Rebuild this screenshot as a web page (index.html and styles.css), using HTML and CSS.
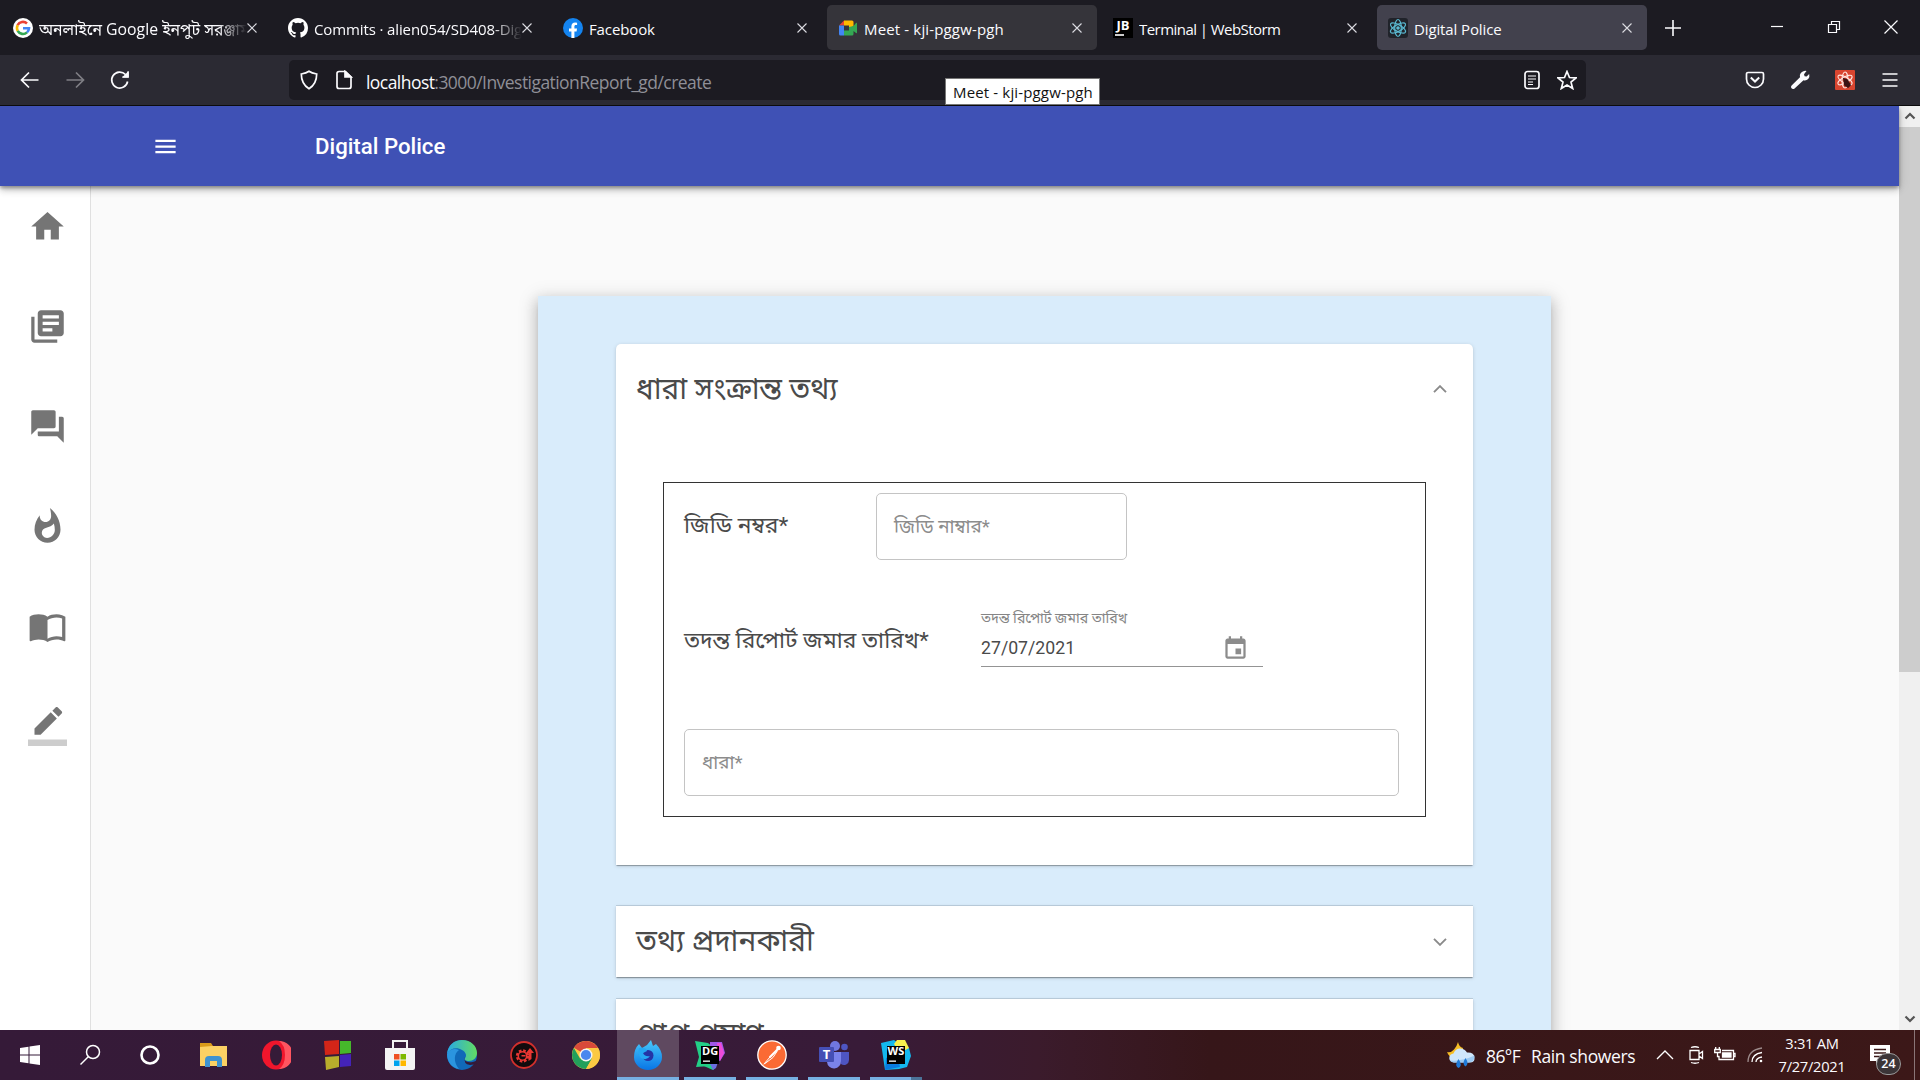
FILE: index.html
```html
<!DOCTYPE html>
<html lang="bn">
<head>
<meta charset="utf-8">
<title>Digital Police</title>
<link rel="stylesheet" href="styles.css">
</head>
<body>
<div class="desktop">
  <header class="tabs">
    <div class="tab">
      <svg class="fav" viewBox="0 0 20 20"><circle cx="10" cy="10" r="10" fill="#fff"/><g fill="none" stroke-width="2.6"><path d="M4.6 7.2A6 6 0 0 1 14 5.5" stroke="#ea4335"/><path d="M4.7 12.8a6 6 0 0 1 0-5.7" stroke="#fbbc05"/><path d="M14 14.4a6 6 0 0 1-9.3-1.6" stroke="#34a853"/><path d="M10 10.2h6a6 6 0 0 1-2 4.2" stroke="#4285f4"/></g></svg>
      <span class="tab-title fade bangla">অনলাইনে Google ইনপুট সরঞ্জাম</span>
      <svg class="x" viewBox="0 0 10 10"><path d="M.5.5l9 9M9.500.5l-9 9"/></svg>
    </div>
    <div class="tab">
      <svg class="fav" viewBox="0 0 16 16"><path fill="#fff" d="M8 0C3.580 0 0 3.580 0 8c0 3.540 2.290 6.530 5.470 7.590.4.070.55-.17.55-.38v-1.490c-2.010.37-2.530-.49-2.690-.94-.09-.23-.48-.94-.82-1.130-.28-.15-.68-.52-.01-.53.63-.01 1.080.58 1.230.82.72 1.210 1.870.87 2.330.66.07-.52.28-.87.51-1.070-1.780-.2-3.640-.89-3.640-3.950 0-.87.31-1.590.82-2.150-.08-.2-.36-1.020.08-2.120 0 0 .67-.21 2.200.82a7.600 7.600 0 0 1 4 0c1.530-1.040 2.200-.82 2.200-.82.44 1.100.16 1.920.08 2.120.51.56.82 1.270.82 2.150 0 3.070-1.870 3.750-3.650 3.950.29.25.54.73.54 1.480v2.200c0 .21.15.46.55.38A8 8 0 0 0 16 8c0-4.420-3.580-8-8-8z"/></svg>
      <span class="tab-title fade">Commits · alien054/SD408-Digital</span>
      <svg class="x" viewBox="0 0 10 10"><path d="M.5.5l9 9M9.500.5l-9 9"/></svg>
    </div>
    <div class="tab">
      <svg class="fav" viewBox="0 0 20 20"><circle cx="10" cy="10" r="10" fill="#1484f0"/><path d="M8.400 20v-6.600H6v-2.900h2.400V8.300c0-2.500 1.500-3.800 3.700-3.800l2 .2v2.400h-1.200c-1.200 0-1.500.7-1.500 1.500v1.900h2.600l-.4 2.900h-2.200V20z" fill="#fff"/></svg>
      <span class="tab-title">Facebook</span>
      <svg class="x" viewBox="0 0 10 10"><path d="M.5.5l9 9M9.500.5l-9 9"/></svg>
    </div>
    <div class="tab hover">
      <svg class="fav" viewBox="0 0 20 20"><path fill="#ea4335" d="M6 2.500v5H1z"/><path fill="#ffba00" d="M6 2.500h8a1.500 1.500 0 0 1 1.500 1.500v4L11 11V7.500H6z"/><path fill="#4285f4" d="M1 7.500h5v10H2.500A1.500 1.500 0 0 1 1 16z"/><path fill="#34a853" d="M6 12.500h5V9l4.500-1 2.500-3q1-.6 1 .6v8.800q0 1.200-1 .6L15.500 13v3a1.500 1.500 0 0 1-1.500 1.500H6z"/></svg>
      <span class="tab-title loose">Meet - kji-pggw-pgh</span>
      <svg class="x" viewBox="0 0 10 10"><path d="M.5.5l9 9M9.500.5l-9 9"/></svg>
    </div>
    <div class="tab">
      <span class="fav jb">JB</span>
      <span class="tab-title tight">Terminal | WebStorm</span>
      <svg class="x" viewBox="0 0 10 10"><path d="M.5.5l9 9M9.500.5l-9 9"/></svg>
    </div>
    <div class="tab active">
      <svg class="fav" viewBox="0 0 20 20"><rect width="20" height="20" rx="3" fill="#20232a"/><g fill="none" stroke="#5ab9d1" stroke-width="1.200"><ellipse cx="10" cy="10" rx="8.500" ry="3.300" transform="rotate(90 10 10)"/><ellipse cx="10" cy="10" rx="8.500" ry="3.300" transform="rotate(30 10 10)"/><ellipse cx="10" cy="10" rx="8.500" ry="3.300" transform="rotate(150 10 10)"/></g><circle cx="10" cy="10" r="1.800" fill="#5ab9d1"/></svg>
      <span class="tab-title">Digital Police</span>
      <svg class="x" viewBox="0 0 10 10"><path d="M.5.5l9 9M9.500.5l-9 9"/></svg>
    </div>
    <svg class="newtab" viewBox="0 0 16 16"><path d="M8 0v16M0 8h16"/></svg>
    <div class="wincontrols">
      <svg viewBox="0 0 14 14"><path d="M1 6.500h12"/></svg>
      <svg viewBox="0 0 14 14"><path d="M1.500 4.500h8v8h-8zM4.500 4.500v-3h8v8h-3"/></svg>
      <svg viewBox="0 0 14 14"><path d="M.5.5l13 13M13.500.5l-13 13"/></svg>
    </div>
  </header>

  <div class="toolbar">
    <div class="nav">
      <svg viewBox="0 0 20 20"><path d="M18.500 10H2M9 2.500L1.500 10 9 17.500"/></svg>
      <svg class="dim" viewBox="0 0 20 20"><path d="M1.500 10H18M11 2.500l7.500 7.500-7.500 7.500"/></svg>
      <svg viewBox="0 0 20 20"><path d="M17.600 11.500A8 8 0 1 1 15.500 4.500l2 2M18 1.500V7h-5.500"/><path fill="#fbfbfe" stroke="none" d="M18.600 1v6.600H12z"/></svg>
    </div>
    <div class="urlbar">
      <svg class="ub" viewBox="0 0 20 20"><path d="M10 1.200c2.400 1.800 4.700 2.300 7.700 2.800 0 6.500-1.700 11-7.700 14.800C4 15 2.300 10.500 2.300 4c3-.5 5.300-1 7.700-2.800z"/></svg>
      <svg class="ub" viewBox="0 0 20 20"><path d="M5 1.500h6.500L17 7v9.500a2 2 0 0 1-2 2H5a2 2 0 0 1-2-2v-13a2 2 0 0 1 2-2z"/><path d="M11 1.500V7h6z" fill="#fbfbfe"/></svg>
      <span class="url"><b>localhost</b>:3000/InvestigationReport_gd/create</span>
      <svg class="ub reader" viewBox="0 0 20 20"><rect x="3" y="1.500" width="14" height="17" rx="2.500"/><path d="M6 6h8M6 9h8M6 12h5M6 14.500h5" stroke-width="1.200"/></svg>
      <svg class="ub" viewBox="0 0 20 20"><path d="M10 1.500l2.500 6 6.500.4-5 4.200 1.700 6.400L10 15l-5.700 3.500L6 12.100 1 7.900l6.500-.4z"/></svg>
    </div>
    <div class="ext">
      <svg viewBox="0 0 20 20"><path d="M3 2.500h14a1.500 1.500 0 0 1 1.500 1.500v5a8.500 8.500 0 0 1-17 0V4A1.500 1.500 0 0 1 3 2.500z"/><path d="M5.800 7.500l4.200 4 4.200-4" stroke-width="2"/></svg>
      <svg viewBox="0 0 20 20"><path fill="#fbfbfe" stroke="none" d="M14 1q1.500-.5 2.500 0l-2.500 3.200.6 2 2 .4L19.200 4q.8 3-1 5-2 1.900-4.700 1.200L4.300 18.700Q2.500 19.500 1.300 18 .5 16.700 1.600 15.500L10 7.200Q9 2.700 14 1z"/></svg>
      <svg viewBox="0 0 20 20"><rect width="20" height="20" rx="1" fill="#d9452f" stroke="none"/><g stroke="#ffe3dc" stroke-width="1.100"><ellipse cx="10" cy="10" rx="8" ry="3" transform="rotate(90 10 10)"/><ellipse cx="10" cy="10" rx="8" ry="3" transform="rotate(30 10 10)"/><ellipse cx="10" cy="10" rx="8" ry="3" transform="rotate(150 10 10)"/></g><path d="M9 9l3 1 3 5-2 2-3-2z" fill="#3c1414" stroke="#3c1414"/></svg>
      <svg viewBox="0 0 20 20"><path d="M2.500 4h15M2.500 10h15M2.500 16h15"/></svg>
    </div>
  </div>
  <div class="tooltip">Meet - kji-pggw-pgh</div>

  <div class="viewport">
    <div class="page">
      <div class="appbar">
        <svg viewBox="0 0 24 24"><path d="M3 18h18v-2H3v2zm0-5h18v-2H3v2zm0-7v2h18V6H3z"/></svg>
        <h1>Digital Police</h1>
      </div>
      <div class="body">
        <nav class="sidebar">
          <svg viewBox="0 0 24 24"><path d="M10 20v-6h4v6h5v-8h3L12 3 2 12h3v8z"/></svg>
          <svg viewBox="0 0 24 24"><path d="M4 6H2v14c0 1.100.9 2 2 2h14v-2H4V6zm16-4H8c-1.100 0-2 .9-2 2v12c0 1.100.9 2 2 2h12c1.100 0 2-.9 2-2V4c0-1.100-.9-2-2-2zm-1 9H9V9h10v2zm-4 4H9v-2h6v2zm4-8H9V5h10v2z"/></svg>
          <svg viewBox="0 0 24 24"><path d="M21 6h-2v9H6v2c0 .55.45 1 1 1h11l4 4V7c0-.55-.45-1-1-1zm-4 6V3c0-.55-.45-1-1-1H3c-.55 0-1 .45-1 1v14l4-4h10c.55 0 1-.45 1-1z"/></svg>
          <svg viewBox="0 0 24 24"><path d="M13.500.67s.74 2.650.74 4.800c0 2.060-1.350 3.730-3.410 3.730-2.070 0-3.630-1.670-3.630-3.730l.03-.36C5.210 7.510 4 10.620 4 14c0 4.420 3.580 8 8 8s8-3.580 8-8C20 8.610 17.410 3.800 13.500.67zM11.710 19c-1.780 0-3.220-1.400-3.220-3.140 0-1.620 1.050-2.760 2.810-3.120 1.770-.36 3.600-1.210 4.620-2.580.39 1.290.59 2.650.59 4.040 0 2.650-2.150 4.800-4.800 4.800z"/></svg>
          <svg viewBox="0 0 24 24"><path d="M21 5c-1.110-.35-2.330-.5-3.500-.5-1.950 0-4.050.4-5.500 1.500-1.450-1.100-3.550-1.500-5.500-1.500S2.450 4.900 1 6v14.650c0 .25.25.5.5.5.1 0 .15-.05.25-.05C3.100 20.450 5.050 20 6.500 20c1.950 0 4.050.4 5.500 1.500 1.350-.85 3.800-1.500 5.500-1.500 1.650 0 3.350.3 4.750 1.050.1.050.15.050.25.050.25 0 .5-.25.5-.5V6c-.6-.45-1.250-.75-2-1zm0 13.500c-1.100-.35-2.300-.5-3.500-.5-1.700 0-4.150.65-5.500 1.500V8c1.350-.85 3.800-1.500 5.500-1.500 1.200 0 2.400.15 3.500.5v11.500z"/></svg>
          <svg viewBox="0 0 24 24"><path d="M17.750 7L14 3.250l-10 10V17h3.750l10-10zm2.960-2.960c.39-.39.39-1.020 0-1.410L18.370.29a.996.996 0 0 0-1.410 0L15 2.250 18.750 6l1.960-1.960z"/><path fill-opacity=".36" d="M0 20h24v4H0z"/></svg>
        </nav>
        <main class="paper">
          <section class="card open">
            <div class="card-head"><h2>ধারা সংক্রান্ত তথ্য</h2><svg viewBox="0 0 14 8"><path d="M1 7.200l6-6 6 6"/></svg></div>
            <div class="box">
              <div class="row one"><label>জিডি নম্বর*</label><div class="field">জিডি নাম্বার*</div></div>
              <div class="row two">
                <label>তদন্ত রিপোর্ট জমার তারিখ*</label>
                <div class="date">
                  <small>তদন্ত রিপোর্ট জমার তারিখ</small>
                  <div class="date-row"><span>27/07/2021</span><svg viewBox="0 0 24 24"><path d="M17 12h-5v5h5v-5zM16 1v2H8V1H6v2H5c-1.110 0-1.990.9-1.990 2L3 19c0 1.100.89 2 2 2h14c1.100 0 2-.9 2-2V5c0-1.100-.9-2-2-2h-1V1h-2zm3 18H5V8h14v11z"/></svg></div>
                </div>
              </div>
              <div class="field wide">ধারা*</div>
            </div>
          </section>
          <section class="card"><div class="card-head"><h2>তথ্য প্রদানকারী</h2><svg viewBox="0 0 14 8"><path d="M1 .8l6 6 6-6"/></svg></div></section>
          <section class="card third"><div class="card-head"><h2>প্রাপ্ত প্রমাণ</h2></div></section>
        </main>
      </div>
    </div>
    <div class="scrollbar">
      <svg viewBox="0 0 12 8"><path d="M1.500 6.500L6 2l4.500 4.500"/></svg>
      <div class="thumb"></div>
      <svg viewBox="0 0 12 8"><path d="M1.500 1.500L6 6l4.500-4.500"/></svg>
    </div>
  </div>

  <footer class="taskbar">
    <div class="t sys"><svg width="20" height="20" viewBox="0 0 20 20"><path fill="#fff" d="M0 3l8.500-1.200v7.700H0zM9.500 1.600L20 0v9.500H9.500zM0 10.500h8.500v7.700L0 17zM9.500 10.500H20V20L9.500 18.400z"/></svg></div>
    <div class="t sys"><svg width="22" height="22" viewBox="0 0 22 22"><g fill="none" stroke="#fff" stroke-width="1.500"><circle cx="14" cy="8" r="6.500"/><path d="M9.500 12.500L1.500 20.500"/></g></svg></div>
    <div class="t sys"><svg width="22" height="22" viewBox="0 0 22 22"><circle cx="11" cy="11" r="8.500" fill="none" stroke="#fff" stroke-width="2.600"/></svg></div>
    <div class="t first"><svg width="30" height="30" viewBox="0 0 30 30"><path fill="#d99a1a" d="M1 3h11l2 3v5H1z"/><path fill="#fbd164" d="M1 7l12-1h15v20H1z"/><path fill="#3f93cf" d="M6 27v-7a4 4 0 0 1 4-4h9a4 4 0 0 1 4 4v7h-5v-6h-7v6z"/></svg></div>
    <div class="t"><svg width="30" height="30" viewBox="0 0 30 30"><ellipse cx="15" cy="15" rx="14" ry="14.500" fill="#f0162c"/><path fill="#ff5560" d="M18 1a14 14 0 0 1 0 28q6-4 6-14T18 1z"/><ellipse cx="15" cy="15" rx="6" ry="10.500" fill="#351b38"/></svg></div>
    <div class="t"><svg width="28" height="30" viewBox="0 0 28 30"><path fill="#d32518" d="M0 1l15-1v14L1 15z"/><path fill="#46b82b" d="M16 1h11v12l-11 1z"/><path fill="#b8ad2c" d="M1 17l14-1v11L2 30z"/><path fill="#4423b8" d="M16 15l11-1v12l-11 1z"/></svg></div>
    <div class="t"><svg width="30" height="30" viewBox="0 0 30 30"><path fill="none" stroke="#f2f2f2" stroke-width="2" d="M8 9V1h14v8"/><path fill="#f4f4f4" d="M0 8h30v20a2 2 0 0 1-2 2H2a2 2 0 0 1-2-2z"/><path fill="#ef4f22" d="M9 14h5.500v5.500H9z"/><path fill="#7db900" d="M15.500 14H21v5.500h-5.500z"/><path fill="#00a3ee" d="M9 20.500h5.500V26H9z"/><path fill="#ffb800" d="M15.500 20.500H21V26h-5.500z"/></svg></div>
    <div class="t"><svg width="30" height="30" viewBox="0 0 30 30"><defs><linearGradient id="eg"><stop offset="0" stop-color="#28a8e6"/><stop offset="1" stop-color="#62dc62"/></linearGradient></defs><circle cx="15" cy="15" r="15" fill="#1069b8"/><path fill="url(#eg)" d="M0 14C1 5 7 0 15 0c9 0 15 6 15 13 0 5-4 8-8 8-3 0-5-1-4-3 2-2 1-6-3-8C10 7 3 8 0 14z"/><path fill="#2b95df" d="M0 14c2-5 8-6 12-4-5 3-6 12 0 19C5 28 0 22 0 14z"/><path fill="#341a38" d="M18 17c-2 4 3 7 11 4l1 0v2q-3 2-7 2-7-1-5-8z"/></svg></div>
    <div class="t"><svg width="28" height="28" viewBox="0 0 28 28"><circle cx="14" cy="14" r="13" fill="#120b0d" stroke="#d2302c" stroke-width="1.800"/><circle cx="12.500" cy="15" r="5.500" fill="none" stroke="#e93733" stroke-width="2.400" stroke-dasharray="2.600 1.720"/><circle cx="12.500" cy="15" r="4.200" fill="none" stroke="#e93733" stroke-width="1.600"/><path fill="#e93733" d="M20 7l4 5h-2.500v6l-3 2v-8H16zM11.500 14h4v1.600h-4z"/></svg></div>
    <div class="t"><svg width="28" height="28" viewBox="0 0 28 28"><circle cx="14" cy="14" r="14" fill="#fbc943"/><path fill="#d84a3a" d="M14 14L2 6.800A14 14 0 0 1 26.100 7H14z"/><path fill="#22a05b" d="M1.900 7A14 14 0 0 0 14 28l6-10.500-12 0z"/><path fill="#fbc943" d="M20 17.500L14 28A14 14 0 0 0 26.100 7H14z"/><circle cx="14" cy="14" r="6.500" fill="#f4f4f4"/><circle cx="14" cy="14" r="5.100" fill="#4a87ee"/></svg></div>
    <div class="t run current"><svg width="30" height="30" viewBox="0 0 30 30"><defs><linearGradient id="fx" x2="0" y2="1"><stop offset="0" stop-color="#49c9fb"/><stop offset="1" stop-color="#0875e5"/></linearGradient></defs><path fill="url(#fx)" d="M6 4l3 4 5-3 4-5 2 6 3-2q6 6 6 13a14 13 0 0 1-28 0Q1 9 6 4z"/><circle cx="15" cy="15.500" r="5.500" fill="#2434a6"/><path fill="#25a8f5" d="M6 8q7-1 8 3l-4 2q2 4 7 3-3 5-9 2-4-5-2-10z"/></svg></div>
    <div class="t run"><svg width="30" height="30" viewBox="0 0 30 30"><path fill="#22cf87" d="M0 1l13 2 6 5-4 18-14 1 3-10z"/><path fill="#a057e8" d="M15 2h12l3 11-5 8-10-3z"/><path fill="#ed4bd8" d="M22 3h4l3 10-4 8z"/><path fill="#22cf87" d="M2 23l10-3 8 8-2 2z"/><path fill="#6b6fe0" d="M14 22h9l-2 6-3 2z"/><path d="M6 6h18v18H6z"/><path fill="#fff" d="M8 20.500h7v1.300H8z"/><text x="7" y="15" class="ide">DG</text></svg></div>
    <div class="t run"><svg width="30" height="30" viewBox="0 0 30 30"><circle cx="15" cy="15" r="14.200" fill="#fb6a34" stroke="#fff" stroke-width="1.300"/><g fill="none" stroke="#fff" stroke-linecap="round"><path stroke-width="2.200" d="M13 17l7-7"/><path stroke-width="1" d="M7 24l6-7M8 23.500l8-6 4-6"/></g><circle cx="21.500" cy="8" r="2.300" fill="#fff"/></svg></div>
    <div class="t run"><svg width="30" height="30" viewBox="0 0 30 30"><circle cx="16" cy="6" r="5" fill="#7077df"/><circle cx="25.500" cy="7" r="3.300" fill="#4e55c2"/><path fill="#4e55c2" d="M20 12h10v8a5 5 0 0 1-8 4z"/><path fill="#7b83eb" d="M10 12h12v9a7 7 0 0 1-14 1z"/><rect y="7" width="15" height="15" rx="1" fill="#454fb5"/><text x="3.700" y="19" class="tm">T</text></svg></div>
    <div class="t run split"><svg width="30" height="30" viewBox="0 0 30 30"><path fill="#13b8ef" d="M0 3l13-3 7 5 8 3 2 8-4 11-8 2-14 1z"/><path fill="#f7f04e" d="M16 0h8l4 8-9 5-6-9z"/><path fill="#087be0" d="M5 18l11-4 3 13-15 3z"/><path d="M6 6h18v18H6z"/><path fill="#fff" d="M8 20.500h7v1.300H8z"/><text x="6.500" y="15" class="ide">WS</text></svg></div>

    <div class="tray">
      <svg class="weather" viewBox="0 0 28 27"><path fill="#f6bd25" d="M11 0q1 5 5 6l-1 8-9 2q-4-1-6-6 4 1 7-2.500T11 0z"/><path fill="#cfe6fb" d="M7 20.500a4.500 4.500 0 0 1-.5-9q2-5 6.500-5t7 4q7-.5 7.500 5T22 20.500z"/><path fill="#9ccaf3" d="M7 20.500a5 5 0 0 1-4-2q12 1 24.500-5 0 7-6 7z"/><path fill="#1f7ad8" d="M11.500 17q4.500 6.500 0 9-4.500-2.500 0-9zM18.500 16q4 6 0 8.500-4-2.500 0-8.500z"/></svg>
      <span class="temp">86°F</span><span class="cond">Rain showers</span>
      <svg class="i up" viewBox="0 0 18 18"><path d="M1 13l8-8 8 8"/></svg>
      <svg class="i cam" viewBox="0 0 18 18"><path d="M3 4.500h9v9H3zM12 8l3.500-2.500v7L12 10M4 1.500q4-1.500 8 0M4 16.500q4 1.500 8 0"/></svg>
      <svg class="i bat" viewBox="0 0 22 18"><path d="M8 4.500h11.500v9H5v-3.500M19.500 7.500h1.500v3h-1.500M1.700 1v2.500M5.300 1v2.500M.7 3.500h5.600v3H.7zM3.500 6.500v4h2"/><path d="M8.500 7h8.500v4H8.500z" fill="#fff"/></svg>
      <svg class="i wifi" viewBox="0 0 18 18"><path opacity=".5" d="M2 16Q2 4 16 2"/><path d="M6 16q0-8 10-9.500M10 16q0-4 6-5"/><circle cx="15" cy="15" r="1.300" fill="#fff" stroke="none"/></svg>
      <div class="clock"><span>3:31 AM</span><span>7/27/2021</span></div>
      <div class="notif"><svg viewBox="0 0 20 20"><path fill="#fff" d="M0 0h20v16H10l-4 4v-4H0z"/><path stroke="#3a1818" stroke-width="1.300" d="M4 4.500h12M4 8h12M4 11.500h8"/></svg><span class="badge">24</span></div>
      <div class="peek"></div>
    </div>
  </footer>
</div>
</body>
</html>
```
FILE: styles.css
```css
* { box-sizing: border-box; }
body { margin: 0; }
svg { display: block; flex: none; }
h1, h2 { margin: 0; font-weight: 400; }
.desktop { position: relative; width: 1920px; height: 1080px; overflow: hidden; display: flex; flex-direction: column; font-family: "Open Sans", "Noto Sans Bengali", sans-serif; color: #fbfbfe; }

/* browser chrome */
.tabs { height: 55px; flex: none; background: #1c1b22; padding: 5px 0 5px 2px; display: flex; gap: 5px; }
.tab { width: 270px; height: 45px; border-radius: 5px; display: flex; align-items: center; padding: 0 15px 0 11px; }
.tab.hover { background: #35343a; }
.tab.active { background: #42414d; }
.fav { width: 20px; height: 20px; flex: none; }
.jb { background: #000; color: #fff; font: 700 13px/15px "Open Sans", sans-serif; text-align: center; position: relative; }
.jb::after { content: ""; position: absolute; left: 2px; bottom: 2px; width: 9px; height: 2px; background: #ccc; }
.tab-title { flex: 1; min-width: 0; margin-left: 6px; padding-top: 2px; overflow: hidden; white-space: nowrap; font-size: 15px; line-height: 24px; letter-spacing: -.12px; }
.tab-title.fade { -webkit-mask-image: linear-gradient(90deg, #000 86%, transparent); mask-image: linear-gradient(90deg, #000 86%, transparent); }
.tab-title.bangla { font-size: 15.800px; letter-spacing: 0; }
.tab-title.loose { letter-spacing: .15px; }
.tab-title.tight { letter-spacing: -.55px; }
.x { width: 10px; height: 10px; }
.x path { stroke: #dcdce2; stroke-width: 1.100; fill: none; }
.newtab { width: 16px; height: 16px; margin: 15px 0 0 13px; stroke: #fbfbfe; stroke-width: 1.600; }
.wincontrols { display: flex; gap: 43px; margin: 15px 22px 0 auto; }
.wincontrols svg { width: 14px; height: 14px; fill: none; stroke: #fbfbfe; stroke-width: 1.200; }
.toolbar { height: 51px; flex: none; background: #2b2a33; border-bottom: 1px solid #0c0c0d; display: flex; align-items: center; padding-right: 20px; }
.nav { display: flex; gap: 25px; padding-left: 20px; width: 289px; }
.nav svg, .ub, .ext svg { width: 20px; height: 20px; fill: none; stroke: #fbfbfe; stroke-width: 1.700; }
.nav .dim { opacity: .4; }
.urlbar { width: 1297px; height: 40px; background: #1c1b22; border-radius: 5px; display: flex; align-items: center; padding: 0 9px 0 10px; gap: 15px; }
.url { flex: 1; margin-left: -3px; padding-top: 3px; font-size: 17.500px; letter-spacing: -.55px; color: #8f8f97; }
.url b { font-weight: 400; color: #fbfbfe; }
.ext { display: flex; gap: 25px; margin-left: auto; }
.tooltip { position: absolute; left: 945px; top: 78px; width: 155px; height: 27px; background: #fff; border: 1px solid #767676; color: #111; font-size: 15px; line-height: 27px; padding-left: 7px; letter-spacing: .15px; white-space: nowrap; z-index: 5; }

/* page */
.viewport { height: 924px; flex: none; display: flex; overflow: hidden; background: #fafafa; }
.page { flex: 1; min-width: 0; font-family: Roboto, "Noto Sans Bengali", sans-serif; color: #4a4a4a; }
.appbar { position: relative; z-index: 2; height: 80px; background: #3f51b5; color: #fff; display: flex; align-items: center; padding-left: 151.500px; box-shadow: 0 2px 5px -1px rgba(0,0,0,.2), 0 5px 6px 0 rgba(0,0,0,.14), 0 1px 12px 0 rgba(0,0,0,.12), 0 2px 3px rgba(0,0,0,.2); }
.appbar svg { width: 27px; height: 27px; fill: #fff; }
.appbar h1 { margin-left: 136.500px; font-size: 22.200px; font-weight: 500; line-height: 30px; }
.body { display: flex; height: 844px; }
.sidebar { width: 91px; background: #fff; border-right: 1px solid #e0e0e0; display: flex; flex-direction: column; gap: 61px; padding: 21px 0 0 27.500px; }
.sidebar svg { width: 39px; height: 39px; fill: #757575; }
.paper { width: 1013px; height: 900px; margin: 110px 0 0 447px; padding: 48px 78px; background: #d9ecfb; box-shadow: 0 6px 6px -3px rgba(0,0,0,.2), 0 6px 13px 1px rgba(0,0,0,.16), 0 4px 18px 3px rgba(0,0,0,.12); }
.card { height: 71px; margin-bottom: 22px; background: #fff; box-shadow: 0 2px 1px -1px rgba(0,0,0,.2), 0 1px 1px rgba(0,0,0,.14), 0 1px 4px rgba(0,0,0,.14), 0 -1px 0 #bdd0df; }
.card.open { height: 521px; margin-bottom: 41px; border-radius: 5px 5px 0 0; box-shadow: 0 2px 1px -1px rgba(0,0,0,.2), 0 1px 1px rgba(0,0,0,.14), 0 1px 4px rgba(0,0,0,.14); }
.card-head { height: 71px; display: flex; align-items: center; justify-content: space-between; padding: 0 26px 0 20px; }
.card-head h2 { margin-top: -2px; }
.open .card-head { height: 90px; }
.open .card-head h2 { margin-top: 0; }
.card-head svg { width: 14px; height: 8px; fill: none; stroke: #8a8a8a; stroke-width: 1.900; }
h2 { font-size: 29.700px; line-height: 40px; white-space: nowrap; }
.box { margin: 48px 47px 0; height: 335px; border: 1px solid #333; padding: 10px 20px 0; }
.row { display: flex; align-items: center; white-space: nowrap; }
.row label { font-size: 22.800px; }
.row.one label { width: 192px; padding-top: 1px; }
.field { width: 251px; height: 67px; border: 1px solid #c4c4c4; border-radius: 5px; padding-left: 17px; line-height: 66px; font-size: 18.800px; color: #8c8c8c; }
.field.wide { width: 715px; margin-top: 62px; }
.row.two { height: 60px; margin-top: 47px; align-items: flex-start; }
.row.two label { width: 297px; line-height: 67px; }
.date { width: 282px; height: 60px; border-bottom: 1px solid #949494; }
.date small { display: block; height: 24px; font-size: 14.200px; line-height: 23px; color: #858585; }
.date-row { display: flex; align-items: center; justify-content: space-between; height: 34px; padding-right: 14px; font-size: 17.700px; }
.date-row svg { width: 27px; height: 27px; fill: #8c8c8c; }
.scrollbar { width: 21px; background: #f0f0f0; display: flex; flex-direction: column; align-items: center; padding: 6px 0 7px; }
.scrollbar svg { width: 12px; height: 8px; fill: none; stroke: #555; stroke-width: 2.200; }
.thumb { width: 21px; height: 545px; margin: 7px 0 auto; background: #cdcdcd; }

/* taskbar */
.taskbar { height: 50px; flex: none; display: flex; background: linear-gradient(90deg, #351a38, #381b38 45%, #3b1b2c 54%, #361619 63%, #3c1818); }
.t { width: 62px; height: 50px; flex: none; display: flex; align-items: center; justify-content: center; position: relative; }
.t.sys { width: 60px; }
.t.first { margin-left: 3px; }
.t.run::after { content: ""; position: absolute; bottom: 0; left: 5px; right: 5px; height: 3px; background: #76b0e2; }
.t.current { background: #5f4960; }
.t.run.current::after { left: 0; right: 0; }
.t.split::after { background: linear-gradient(90deg, #76b0e2 78%, #4b7398 78%); }
.ide { font: 700 11px "Open Sans", sans-serif; fill: #fff; }
.tm { font: 700 13px "Open Sans", sans-serif; fill: #fff; }
.tray { margin-left: auto; width: 473px; display: flex; align-items: center; white-space: nowrap; }
.weather { width: 28px; height: 27px; }
.temp { width: 45px; margin-left: 11px; padding-top: 2px; font-size: 17.500px; letter-spacing: -.6px; }
.cond { width: 105px; padding-top: 2px; font-size: 17.500px; letter-spacing: -.38px; }
.i { height: 18px; fill: none; stroke: #fff; stroke-width: 1.300; }
.up { width: 18px; margin-left: 20px; }
.cam { width: 18px; margin-left: 13px; }
.bat { width: 22px; margin-left: 9px; }
.wifi { width: 18px; margin-left: 10px; }
.clock { width: 80px; margin-left: 8px; display: flex; flex-direction: column; align-items: center; font-size: 14.700px; line-height: 23px; letter-spacing: -.3px; }
.notif { position: relative; width: 33px; margin-left: 18px; }
.notif svg { width: 20px; height: 20px; }
.badge { position: absolute; left: 6px; top: 8px; width: 25px; height: 22px; border: 1px solid #999; border-radius: 12px; background: #3b3437; font-size: 12.500px; font-weight: 600; line-height: 20px; text-align: center; }
.peek { width: 1px; height: 50px; margin-left: auto; margin-right: 5px; background: #8a7577; }
```
